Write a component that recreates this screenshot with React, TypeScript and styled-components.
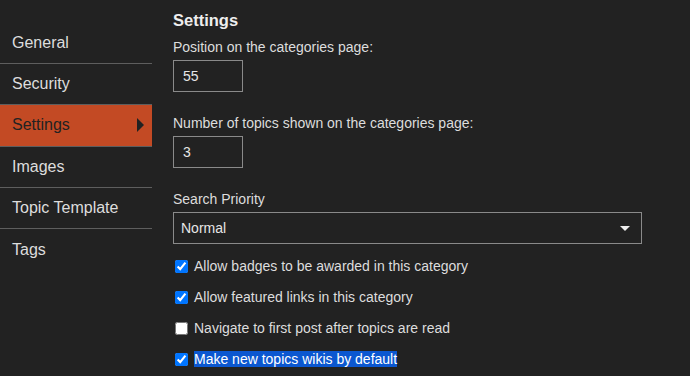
import styled, { createGlobalStyle } from 'styled-components';

const GlobalStyle = createGlobalStyle`
  body {
    margin: 0;
    background: #222222;
    font-family: "Liberation Sans", Arial, sans-serif;
    color: #dddddd;
  }
`;

const Page = styled.div`
  display: flex;
  width: 690px;
  height: 376px;
  overflow: hidden;
  background: #222222;
`;

const Sidebar = styled.ul`
  list-style: none;
  margin: 0;
  padding: 22.5px 0 0;
  width: 152px;
  flex-shrink: 0;
`;

const NavItem = styled.li<{ $active?: boolean }>`
  position: relative;
  display: flex;
  align-items: center;
  height: 40.4px;
  padding-left: 12px;
  font-size: 16px;
  color: ${(p) => (p.$active ? '#222222' : '#dddddd')};
  background: ${(p) => (p.$active ? '#c34a24' : 'transparent')};

  & + & {
    border-top: 1px solid #5e5e5e;
  }
`;

const Caret = styled.span`
  position: absolute;
  right: 8px;
  top: 50%;
  margin-top: -7px;
  width: 0;
  height: 0;
  border-top: 7px solid transparent;
  border-bottom: 7px solid transparent;
  border-left: 7px solid #222222;
`;

const Main = styled.div`
  flex: 1;
  padding: 10px 0 0 21px;
`;

const Heading = styled.h3`
  margin: 0 0 7px;
  font-size: 16.5px;
  line-height: 20px;
  font-weight: bold;
  color: #eeeeee;
`;

const Field = styled.div`
  margin-bottom: 21px;
`;

const Label = styled.div`
  font-size: 14px;
  line-height: 20px;
  margin-bottom: 3px;
`;

const NumberBox = styled.div`
  box-sizing: border-box;
  width: 70px;
  height: 32px;
  border: 1px solid #8a8a8a;
  padding-left: 9px;
  display: flex;
  align-items: center;
  font-size: 14px;
  color: #e6e6e6;
`;

const Select = styled.div`
  box-sizing: border-box;
  width: 469px;
  height: 32px;
  border: 1px solid #8a8a8a;
  padding: 0 11px 0 7px;
  display: flex;
  align-items: center;
  justify-content: space-between;
  font-size: 14px;
  color: #e6e6e6;
`;

const SelectCaret = styled.span`
  width: 0;
  height: 0;
  border-left: 5px solid transparent;
  border-right: 5px solid transparent;
  border-top: 5px solid #eeeeee;
`;

const Checks = styled.div`
  padding-top: 12px;
  display: flex;
  flex-direction: column;
  gap: 11px;
`;

const CheckRow = styled.label`
  display: flex;
  align-items: center;
  height: 20px;
  font-size: 14px;
  color: #dddddd;

  input {
    width: 13px;
    height: 13px;
    margin: 0 6px 0 2px;
  }
`;

const Selected = styled.span`
  background: #0b57d0;
  color: #ffffff;
`;

const navItems = ['General', 'Security', 'Settings', 'Images', 'Topic Template', 'Tags'];

const checks = [
  { text: 'Allow badges to be awarded in this category', checked: true },
  { text: 'Allow featured links in this category', checked: true },
  { text: 'Navigate to first post after topics are read', checked: false },
];

export default function App() {
  return (
    <>
      <GlobalStyle />
      <Page>
        <Sidebar>
          {navItems.map((item) => (
            <NavItem key={item} $active={item === 'Settings'}>
              {item}
              {item === 'Settings' && <Caret />}
            </NavItem>
          ))}
        </Sidebar>
        <Main>
          <Heading>Settings</Heading>
          <Field>
            <Label>Position on the categories page:</Label>
            <NumberBox>55</NumberBox>
          </Field>
          <Field>
            <Label>Number of topics shown on the categories page:</Label>
            <NumberBox>3</NumberBox>
          </Field>
          <div>
            <Label>Search Priority</Label>
            <Select>
              Normal
              <SelectCaret />
            </Select>
          </div>
          <Checks>
            {checks.map((c) => (
              <CheckRow key={c.text}>
                <input type="checkbox" defaultChecked={c.checked} />
                {c.text}
              </CheckRow>
            ))}
            <CheckRow>
              <input type="checkbox" defaultChecked />
              <Selected>Make new topics wikis by default</Selected>
            </CheckRow>
          </Checks>
        </Main>
      </Page>
    </>
  );
}
